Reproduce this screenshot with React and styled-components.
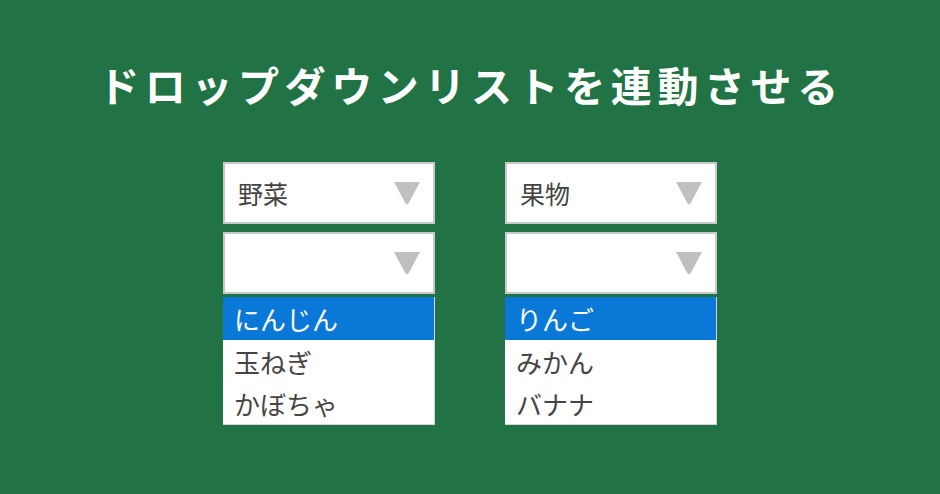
import React from "react";
import styled, { createGlobalStyle } from "styled-components";

const Global = createGlobalStyle`
  html, body { margin: 0; padding: 0; background: #217346; }
  body { font-family: "Noto Sans CJK JP", "Noto Sans", sans-serif; }
`;

const Page = styled.div`
  width: 940px;
  height: 494px;
  background: #217346;
  display: flex;
  flex-direction: column;
  align-items: center;
  box-sizing: border-box;
  padding-top: 54px;
`;

const Title = styled.h1`
  margin: 0 0 0 2px;
  color: #ffffff;
  font-size: 41px;
  font-weight: 700;
  line-height: 60px;
  letter-spacing: 5.6px;
`;

const Columns = styled.div`
  display: flex;
  gap: 70px;
  margin-top: 48px;
`;

const Column = styled.div`
  display: flex;
  flex-direction: column;
  width: 212px;
`;

const Select = styled.div`
  box-sizing: border-box;
  width: 212px;
  height: 62px;
  background: #fff;
  border: 2px solid #c9c9c9;
  display: flex;
  align-items: center;
  justify-content: space-between;
  padding: 0 12px 0 13px;
  margin-bottom: ${(p) => p.$gap || 0}px;
  color: #444;
  font-size: 25px;
`;

const Arrow = styled.svg`
  width: 28px;
  height: 24px;
  flex: none;
`;

const List = styled.div`
  box-sizing: border-box;
  margin-top: 3px;
  width: 212px;
  background: #fff;
  border-right: 1px solid #d4d4d4;
  border-bottom: 1px solid #d4d4d4;
`;

const Item = styled.div`
  height: ${(p) => (p.$first ? 43 : 42)}px;
  display: flex;
  align-items: center;
  padding-left: 11px;
  font-size: 26px;
  color: ${(p) => (p.$selected ? "#fff" : "#444")};
  background: ${(p) => (p.$selected ? "#0a78d7" : "#fff")};
`;

const Triangle = () => (
  <Arrow viewBox="0 0 28 24">
    <path d="M1 1 H27 L15.5 22.5 Q14 24 12.5 22.5 Z" fill="#c0c0c0" />
  </Arrow>
);

const Dropdown = ({ category, items }) => (
  <Column>
    <Select $gap={8}>
      <span>{category}</span>
      <Triangle />
    </Select>
    <Select>
      <span />
      <Triangle />
    </Select>
    <List>
      {items.map((it, i) => (
        <Item key={it} $selected={i === 0} $first={i === 0}>
          {it}
        </Item>
      ))}
    </List>
  </Column>
);

export default function App() {
  return (
    <>
      <Global />
      <Page>
        <Title>ドロップダウンリストを連動させる</Title>
        <Columns>
          <Dropdown category="野菜" items={["にんじん", "玉ねぎ", "かぼちゃ"]} />
          <Dropdown category="果物" items={["りんご", "みかん", "バナナ"]} />
        </Columns>
      </Page>
    </>
  );
}
